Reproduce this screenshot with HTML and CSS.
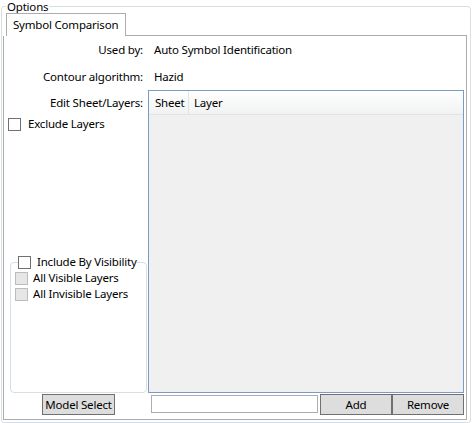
FILE: index.html
```html
<!DOCTYPE html>
<html>
<head>
<meta charset="utf-8">
<title>Options</title>
<link rel="stylesheet" href="styles.css">
</head>
<body>
<fieldset class="options">
  <legend class="options-title">Options</legend>
  <div class="tabs">
    <div class="tab">Symbol Comparison</div>
    <div class="tab-fill"></div>
  </div>
  <div class="panel">
    <div class="field">
      <span class="field-label">Used by:</span>
      <span class="field-value">Auto Symbol Identification</span>
    </div>
    <div class="field field-gap">
      <span class="field-label">Contour algorithm:</span>
      <span class="field-value">Hazid</span>
    </div>
    <div class="main">
      <div class="side">
        <div class="field-label side-label">Edit Sheet/Layers:</div>
        <label class="check exclude"><span class="box"></span>Exclude Layers</label>
        <fieldset class="visibility">
          <legend class="visibility-title"><label class="check"><span class="box"></span>Include By Visibility</label></legend>
          <label class="check sub"><span class="box box-disabled"></span>All Visible Layers</label>
          <label class="check sub"><span class="box box-disabled"></span>All Invisible Layers</label>
        </fieldset>
      </div>
      <div class="grid">
        <div class="grid-head">
          <div class="col col-sheet">Sheet</div>
          <div class="col col-layer">Layer</div>
        </div>
        <div class="grid-body"></div>
      </div>
    </div>
    <div class="actions">
      <div class="actions-left">
        <button class="btn btn-model" type="button">Model Select</button>
      </div>
      <div class="actions-right">
        <input class="text-input" type="text">
        <button class="btn btn-pair" type="button">Add</button>
        <button class="btn btn-pair" type="button">Remove</button>
      </div>
    </div>
  </div>
</fieldset>
</body>
</html>
```

FILE: styles.css
```css
* { box-sizing: border-box; }

html, body {
  margin: 0;
  padding: 0;
  background: #ffffff;
}

body {
  font-family: "Noto Sans", "Liberation Sans", sans-serif;
  font-size: 11.5px;
  letter-spacing: -0.2px;
  line-height: 16px;
  color: #000000;
  width: 473px;
  height: 423px;
  overflow: hidden;
}

/* outer "Options" group box */
.options {
  margin: 0 2px 0 1px;
  padding: 0 3px 2px 1px;
  border: 1px solid #d5dfe5;
  border-radius: 3px;
  min-width: 0;
}

.options-title {
  margin-left: 3px;
  padding: 0 1px;
  line-height: 13px;
  height: 13px;
}

/* tab strip */
.tabs {
  display: flex;
  height: 23px;
}

.tab {
  margin-left: 3px;
  padding: 3px 7px 0 6px;
  border: 1px solid #acacac;
  border-bottom: none;
  background: #ffffff;
  white-space: nowrap;
}

.tab-fill {
  flex: 1;
  border-bottom: 1px solid #acacac;
}

/* tab content */
.panel {
  border: 1px solid #acacac;
  border-top: none;
  padding: 6px 2px 4px 0;
}

.field {
  display: flex;
  height: 16px;
}

.field-gap { margin-top: 11px; }

.field-label {
  width: 139px;
  text-align: right;
  white-space: nowrap;
}

.field-value {
  margin-left: 11px;
  white-space: nowrap;
}

.main {
  display: grid;
  grid-template-columns: 144px 1fr;
  margin-top: 5px;
  height: 303px;
}

.side {
  display: flex;
  flex-direction: column;
}

.side-label { margin-top: 5px; }

.check {
  display: flex;
  align-items: center;
  height: 16px;
  white-space: nowrap;
}

.box {
  width: 13px;
  height: 13px;
  border: 1px solid #707070;
  background: #ffffff;
  flex: none;
}

.box-disabled {
  border-color: #bcbcbc;
  background: #e6e6e6;
}

.exclude {
  margin-top: 5px;
  margin-left: 4px;
  gap: 7px;
}

/* "Include By Visibility" group */
.visibility {
  margin: auto 0 0 6px;
  width: 137px;
  padding: 0 0 0 4px;
  border: 1px solid #d5dfe5;
  border-radius: 4px;
  height: 139px;
  min-width: 0;
}

.visibility-title {
  padding: 0;
  margin-left: 3px;
  height: 16px;
  background: #ffffff;
}

.visibility-title .check { gap: 6px; }

.sub { gap: 5px; }

/* sheet / layer grid */
.grid {
  border: 1px solid #7a9bc4;
  display: flex;
  flex-direction: column;
}

.grid-head {
  display: flex;
  height: 24px;
  background: linear-gradient(#ffffff, #f1f2f3);
  border-bottom: 1px solid #e2e3e4;
}

.col {
  padding: 4px 0 0 6px;
}

.col-sheet {
  width: 40px;
  border-right: 1px solid #e2e3e4;
}

.col-layer { padding-left: 5px; }

.grid-body {
  flex: 1;
  background: #f0f0f0;
}

/* bottom buttons */
.actions {
  display: grid;
  grid-template-columns: 144px 1fr;
  margin-top: 1px;
  height: 21px;
}

.actions-left { padding-left: 38px; }

.actions-right {
  display: flex;
  padding-left: 3px;
}

.btn {
  font-family: inherit;
  font-size: 11.5px;
  letter-spacing: -0.2px;
  line-height: 16px;
  color: #000000;
  background: #dddddd;
  border: 1px solid #707070;
  padding: 0;
  margin: 0;
  height: 21px;
  white-space: nowrap;
  flex: none;
}

.btn-model { width: 73px; }

.btn-pair { width: 72px; }

.text-input {
  flex: 1;
  width: 0;
  min-width: 0;
  height: 18px;
  margin: 1px 2px 0 0;
  border: 1px solid #abadb3;
  padding: 0;
  font-family: inherit;
  font-size: 11.5px;
}
```
